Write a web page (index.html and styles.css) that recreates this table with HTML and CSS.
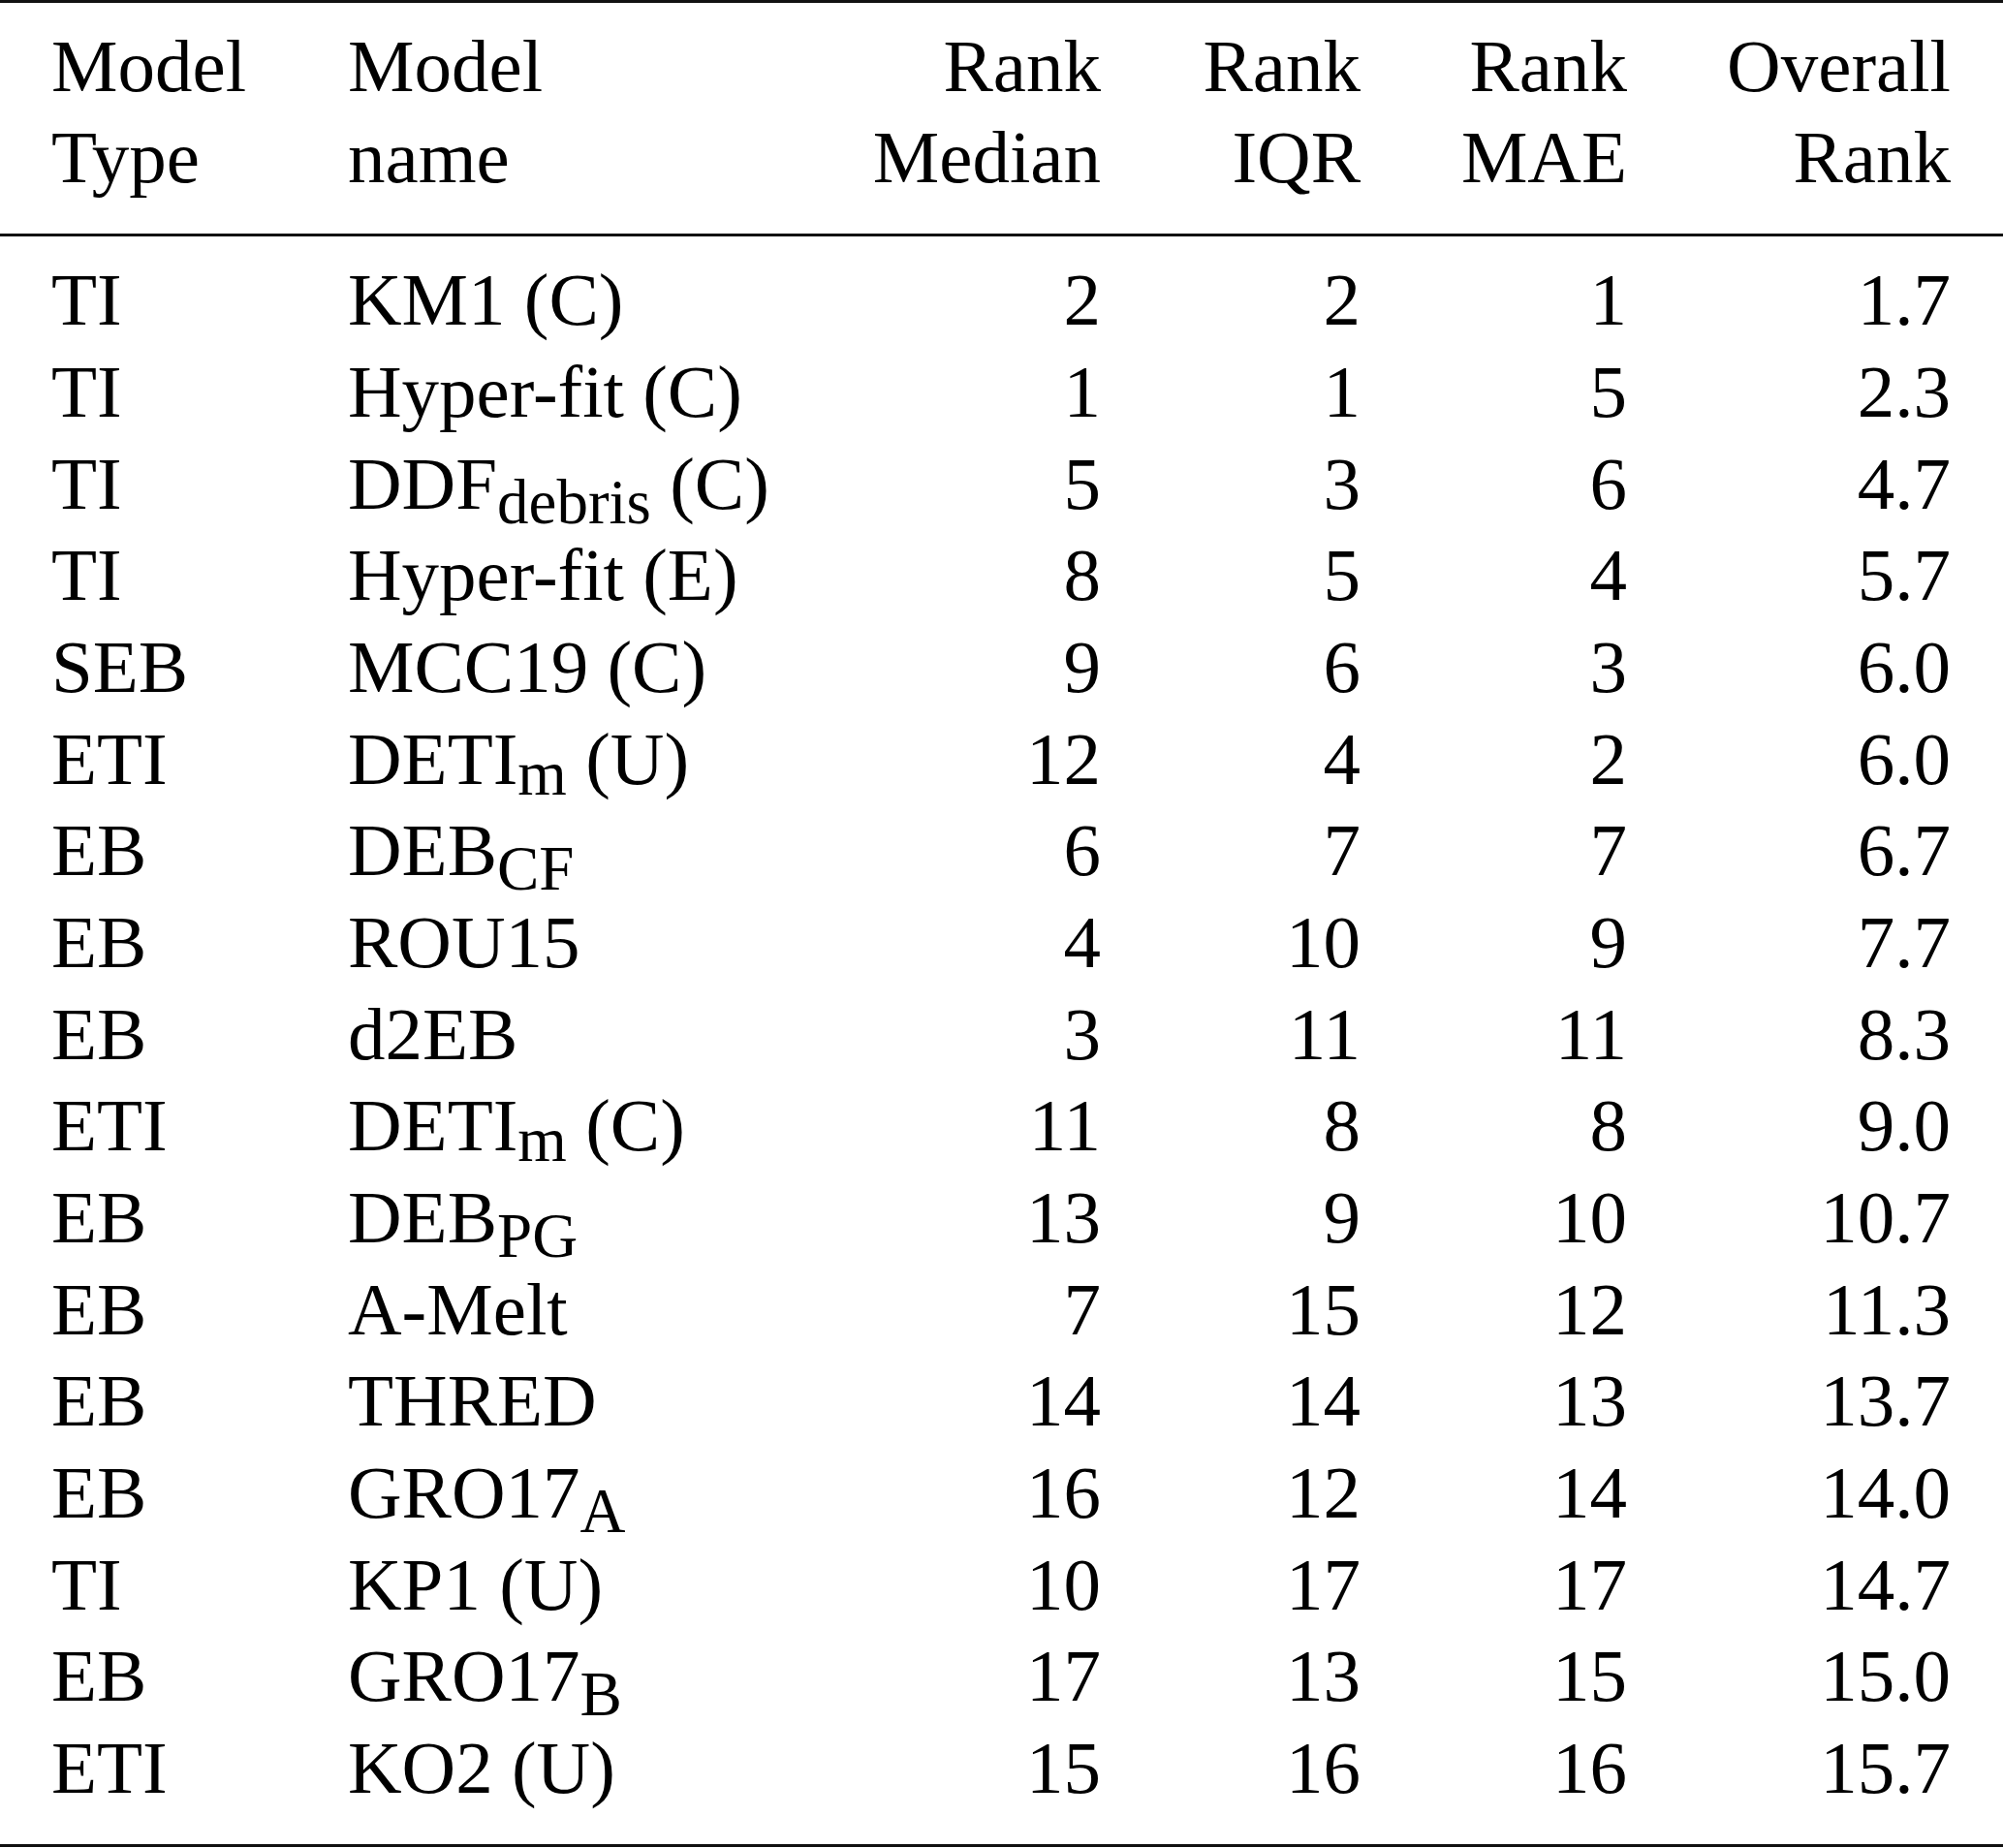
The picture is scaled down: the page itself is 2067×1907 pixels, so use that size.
FILE: index.html
```html
<!DOCTYPE html>
<html>
<head>
<meta charset="utf-8">
<link rel="stylesheet" href="styles.css">
</head>
<body>
<div class="table">
  <div class="grid head">
    <div class="c l">Model<br>Type</div>
    <div class="c l">Model<br>name</div>
    <div class="c r">Rank<br>Median</div>
    <div class="c r">Rank<br>IQR</div>
    <div class="c r">Rank<br>MAE</div>
    <div class="c r">Overall<br>Rank</div>
  </div>
  <div class="grid body">
    <div class="c l">TI</div><div class="c l">KM1 (C)</div><div class="c r">2</div><div class="c r">2</div><div class="c r">1</div><div class="c r">1.7</div>
    <div class="c l">TI</div><div class="c l">Hyper-fit (C)</div><div class="c r">1</div><div class="c r">1</div><div class="c r">5</div><div class="c r">2.3</div>
    <div class="c l">TI</div><div class="c l">DDF<sub class="s">debris</sub> (C)</div><div class="c r">5</div><div class="c r">3</div><div class="c r">6</div><div class="c r">4.7</div>
    <div class="c l">TI</div><div class="c l">Hyper-fit (E)</div><div class="c r">8</div><div class="c r">5</div><div class="c r">4</div><div class="c r">5.7</div>
    <div class="c l">SEB</div><div class="c l">MCC19 (C)</div><div class="c r">9</div><div class="c r">6</div><div class="c r">3</div><div class="c r">6.0</div>
    <div class="c l">ETI</div><div class="c l">DETI<sub class="s low">m</sub> (U)</div><div class="c r">12</div><div class="c r">4</div><div class="c r">2</div><div class="c r">6.0</div>
    <div class="c l">EB</div><div class="c l">DEB<sub class="s">CF</sub></div><div class="c r">6</div><div class="c r">7</div><div class="c r">7</div><div class="c r">6.7</div>
    <div class="c l">EB</div><div class="c l">ROU15</div><div class="c r">4</div><div class="c r">10</div><div class="c r">9</div><div class="c r">7.7</div>
    <div class="c l">EB</div><div class="c l">d2EB</div><div class="c r">3</div><div class="c r">11</div><div class="c r">11</div><div class="c r">8.3</div>
    <div class="c l">ETI</div><div class="c l">DETI<sub class="s low">m</sub> (C)</div><div class="c r">11</div><div class="c r">8</div><div class="c r">8</div><div class="c r">9.0</div>
    <div class="c l">EB</div><div class="c l">DEB<sub class="s">PG</sub></div><div class="c r">13</div><div class="c r">9</div><div class="c r">10</div><div class="c r">10.7</div>
    <div class="c l">EB</div><div class="c l">A-Melt</div><div class="c r">7</div><div class="c r">15</div><div class="c r">12</div><div class="c r">11.3</div>
    <div class="c l">EB</div><div class="c l">THRED</div><div class="c r">14</div><div class="c r">14</div><div class="c r">13</div><div class="c r">13.7</div>
    <div class="c l">EB</div><div class="c l">GRO17<sub class="s">A</sub></div><div class="c r">16</div><div class="c r">12</div><div class="c r">14</div><div class="c r">14.0</div>
    <div class="c l">TI</div><div class="c l">KP1 (U)</div><div class="c r">10</div><div class="c r">17</div><div class="c r">17</div><div class="c r">14.7</div>
    <div class="c l">EB</div><div class="c l">GRO17<sub class="s">B</sub></div><div class="c r">17</div><div class="c r">13</div><div class="c r">15</div><div class="c r">15.0</div>
    <div class="c l">ETI</div><div class="c l">KO2 (U)</div><div class="c r">15</div><div class="c r">16</div><div class="c r">16</div><div class="c r">15.7</div>
  </div>
</div>
</body>
</html>
```

FILE: styles.css
```css
html, body {
  margin: 0;
  padding: 0;
  background: #fff;
}

body {
  width: 2067px;
  height: 1907px;
  overflow: hidden;
}

.table {
  width: 2067px;
  font-family: "Liberation Serif", "Times New Roman", serif;
  font-size: 77px;
  line-height: 94.67px;
  color: #000;
  border-top: 3px solid #111;
  border-bottom: 3px solid #111;
}

.grid {
  display: grid;
  grid-template-columns: 306px 441px 336px 268px 275px 334px;
  padding: 0 54px 0 53px;
}

.head {
  padding-top: 17.6px;
  padding-bottom: 31.1px;
  border-bottom: 3px solid #111;
}

.body {
  padding-top: 18.3px;
  padding-bottom: 31.3px;
}

.c {
  white-space: nowrap;
}

.l {
  text-align: left;
}

.r {
  text-align: right;
}

.s {
  font-size: 65px;
  line-height: 0;
  vertical-align: -15px;
}

.s.low {
  vertical-align: -11px;
}
```
